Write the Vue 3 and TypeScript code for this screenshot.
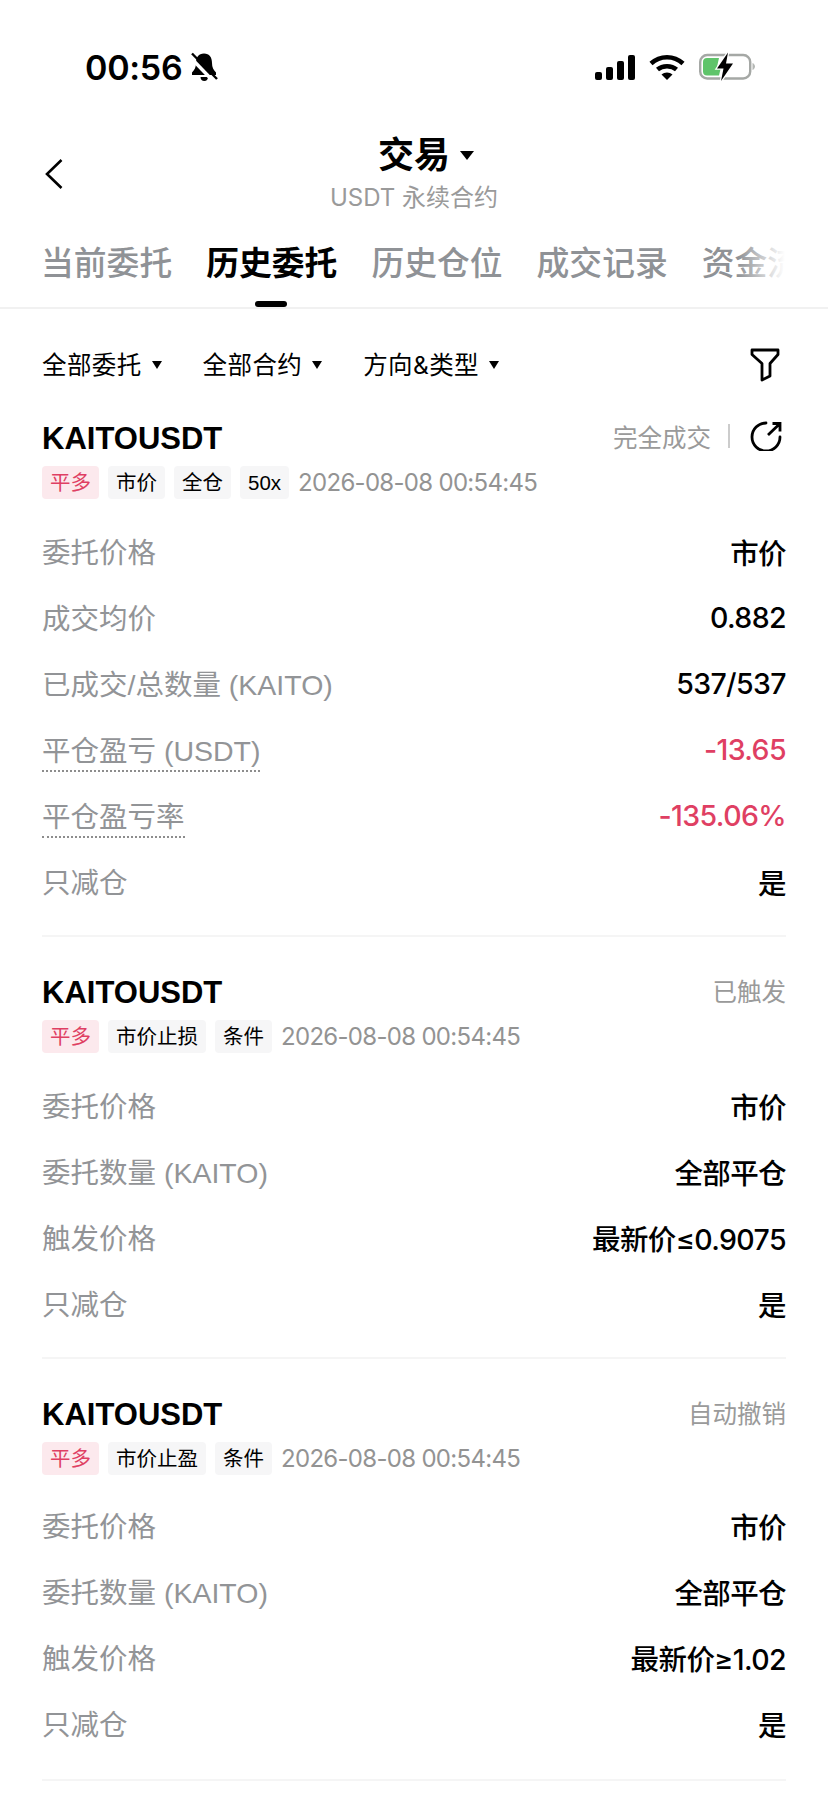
<script setup lang="ts">
interface Tag {
  text: string
  red?: boolean
}

interface Row {
  label: string
  value: string
  red?: boolean
  dotted?: boolean
}

interface Order {
  status: string
  share?: boolean
  tags: Tag[]
  rows: Row[]
}

const tabs = ['当前委托', '历史委托', '历史仓位', '成交记录', '资金流水']
const filters = ['全部委托', '全部合约', '方向&类型']
const time = '2026-08-08 00:54:45'

const orders: Order[] = [
  {
    status: '完全成交',
    share: true,
    tags: [{ text: '平多', red: true }, { text: '市价' }, { text: '全仓' }, { text: '50x' }],
    rows: [
      { label: '委托价格', value: '市价' },
      { label: '成交均价', value: '0.882' },
      { label: '已成交/总数量 (KAITO)', value: '537/537' },
      { label: '平仓盈亏 (USDT)', value: '-13.65', red: true, dotted: true },
      { label: '平仓盈亏率', value: '-135.06%', red: true, dotted: true },
      { label: '只减仓', value: '是' }
    ]
  },
  {
    status: '已触发',
    tags: [{ text: '平多', red: true }, { text: '市价止损' }, { text: '条件' }],
    rows: [
      { label: '委托价格', value: '市价' },
      { label: '委托数量 (KAITO)', value: '全部平仓' },
      { label: '触发价格', value: '最新价≤0.9075' },
      { label: '只减仓', value: '是' }
    ]
  },
  {
    status: '自动撤销',
    tags: [{ text: '平多', red: true }, { text: '市价止盈' }, { text: '条件' }],
    rows: [
      { label: '委托价格', value: '市价' },
      { label: '委托数量 (KAITO)', value: '全部平仓' },
      { label: '触发价格', value: '最新价≥1.02' },
      { label: '只减仓', value: '是' }
    ]
  }
]
</script>

<template>
  <div class="page">
    <div class="status-bar">
      <div class="clock">
        <span>00:56</span>
        <svg class="bell" width="27" height="30" viewBox="0 0 27 30">
          <path d="M13 1.500c-5.500 0-8 4-8 9.500 0 4.500-1.500 7-4 9.500V23h24v-2.500c-2.500-2.500-4-5-4-9.500 0-5.500-2.500-9.500-8-9.500z" fill="#000" />
          <path d="M9.500 25h7.500c0 2.500-1.500 4-3.700 4s-3.800-1.500-3.800-4z" fill="#000" />
          <path d="M-1 5L23 30" stroke="#fff" stroke-width="3.500" />
          <path d="M1 1.500L26 27" stroke="#000" stroke-width="2.400" />
        </svg>
      </div>
      <div class="status-icons">
        <svg width="40" height="25" viewBox="0 0 40 25">
          <rect x="0" y="17" width="7" height="8" rx="2" fill="#000" />
          <rect x="11" y="12" width="7" height="13" rx="2" fill="#000" />
          <rect x="22" y="6" width="7" height="19" rx="2" fill="#000" />
          <rect x="33" y="0" width="7" height="25" rx="2" fill="#000" />
        </svg>
        <svg width="36" height="26" viewBox="0 0 36 26">
          <path d="M2 9.500C11 1 25 1 34 9.500" fill="none" stroke="#000" stroke-width="4.500" />
          <path d="M8.500 15.500C13.500 11 22.500 11 27.500 15.500" fill="none" stroke="#000" stroke-width="4.500" />
          <path d="M12.500 20.500c3-2.800 8-2.800 11 0L18 26z" fill="#000" />
        </svg>
        <svg width="56" height="30" viewBox="0 0 56 30">
          <rect x="1.200" y="3" width="50" height="23.500" rx="7" fill="none" stroke="#a5a8a5" stroke-width="2.400" />
          <path d="M8 6h12l-2 9h4l-2 8.500H8a4 4 0 0 1-4-4V10a4 4 0 0 1 4-4z" fill="#5fc46a" />
          <path d="M53.500 11c1.500.6 2.500 2 2.500 3.500s-1 2.900-2.500 3.500z" fill="#b5b8b5" />
          <path d="M29 0.500L18 16.500h6.500L22 29 34 11.500h-7z" fill="#000" stroke="#fff" stroke-width="2.500" paint-order="stroke" />
        </svg>
      </div>
    </div>

    <div class="nav">
      <svg class="back" width="18" height="30" viewBox="0 0 18 30">
        <path d="M16.500 1L2 15l14.500 14" fill="none" stroke="#000" stroke-width="2.600" />
      </svg>
      <div class="nav-center">
        <div class="nav-title">
          <span class="nav-name">
            交易
            <i class="caret caret-lg"></i>
          </span>
        </div>
        <div class="nav-sub">USDT 永续合约</div>
      </div>
    </div>

    <div class="tabs">
      <div v-for="(tab, i) in tabs" :key="tab" class="tab" :class="{ active: i === 1 }">{{ tab }}</div>
      <div class="tabs-fade"></div>
    </div>

    <div class="filters">
      <div v-for="f in filters" :key="f" class="filter">
        <span>{{ f }}</span>
        <i class="caret"></i>
      </div>
      <svg class="funnel" width="30" height="34" viewBox="0 0 30 34">
        <path d="M2 2h26v4.500L20 15.500V28l-8 4V15.500L2 6.500z" fill="none" stroke="#000" stroke-width="2.800" stroke-linejoin="round" />
      </svg>
    </div>

    <div v-for="(order, n) in orders" :key="n" class="order">
      <div class="order-head">
        <span class="symbol">KAITOUSDT</span>
        <div class="order-status">
          <span>{{ order.status }}</span>
          <template v-if="order.share">
            <i class="status-sep"></i>
            <svg class="share" width="32" height="30" viewBox="0 0 32 30">
              <path d="M16 2A14 14 0 1 0 30 16" fill="none" stroke="#000" stroke-width="2.800" stroke-linecap="round" />
              <path d="M18 14L30 2.500M22.500 2.500h7.500v8" fill="none" stroke="#000" stroke-width="2.800" />
            </svg>
          </template>
        </div>
      </div>
      <div class="tag-row">
        <span v-for="tag in order.tags" :key="tag.text" class="tag" :class="{ 'tag-red': tag.red }">{{ tag.text }}</span>
        <span class="order-time">{{ time }}</span>
      </div>
      <div class="rows">
        <div v-for="row in order.rows" :key="row.label" class="row">
          <span class="label" :class="{ dotted: row.dotted }">{{ row.label }}</span>
          <span class="value" :class="{ red: row.red }">{{ row.value }}</span>
        </div>
      </div>
    </div>
  </div>
</template>

<style scoped>
.page {
  width: 828px;
  height: 1801px;
  overflow: hidden;
  background: #fff;
  color: #000;
  font-family: Inter, "Noto Sans CJK SC", sans-serif;
}

.status-bar {
  height: 134px;
  display: flex;
  align-items: center;
  justify-content: space-between;
  padding: 0 73px 0 85px;
}

.clock {
  display: flex;
  align-items: center;
  gap: 9px;
  font-size: 34px;
  font-weight: 600;
  letter-spacing: -0.3px;
}

.status-icons {
  display: flex;
  align-items: center;
  gap: 14px;
}

.nav {
  height: 80px;
  padding: 0 42px;
  display: grid;
  grid-template-columns: 1fr auto 1fr;
  align-items: center;
}

.back {
  margin-left: 3px;
  margin-top: -1px;
}

.nav-center {
  text-align: center;
}

.nav-title {
  height: 42px;
  font-size: 36px;
  font-weight: 700;
  line-height: 42px;
}

.nav-name {
  position: relative;
  display: inline-block;
}

.nav-sub {
  margin-top: 6px;
  font-size: 24px;
  line-height: 32px;
  color: #9a9a9a;
}

.caret {
  display: inline-block;
  width: 0;
  height: 0;
  border-left: 5px solid transparent;
  border-right: 5px solid transparent;
  border-top: 8px solid #000;
}

.caret-lg {
  position: absolute;
  top: 17px;
  left: calc(100% + 10px);
  border-left-width: 7px;
  border-right-width: 7px;
  border-top-width: 9px;
}

.tabs {
  position: relative;
  height: 95px;
  width: 828px;
  box-sizing: border-box;
  padding: 27px 0 0 41px;
  display: flex;
  gap: 34px;
  overflow: hidden;
  border-bottom: 2px solid #f1f1f1;
}

.tab {
  position: relative;
  flex: none;
  height: 66px;
  font-size: 32.800px;
  line-height: 44px;
  font-weight: 500;
  color: #8f9296;
}

.tab.active {
  color: #000;
  font-weight: 700;
}

.tab.active::after {
  content: "";
  position: absolute;
  left: 49px;
  bottom: 0;
  width: 32px;
  height: 6px;
  border-radius: 3px;
  background: #000;
}

.tabs-fade {
  position: absolute;
  top: 0;
  bottom: 0;
  right: 0;
  width: 90px;
  background: linear-gradient(to right, rgba(255, 255, 255, 0), #fff 52%);
}

.filters {
  height: 108px;
  padding: 0 48px 0 42px;
  display: flex;
  align-items: center;
  gap: 41px;
}

.filter {
  display: flex;
  align-items: center;
  gap: 10px;
  font-size: 24.500px;
  letter-spacing: 0.4px;
}

.filter .caret {
  margin-top: 3px;
}

.funnel {
  margin-left: auto;
  margin-top: 3px;
}

.order {
  margin: 0 42px;
  padding-bottom: 22px;
  border-bottom: 2px solid #f5f5f5;
  margin-bottom: 34px;
}

.order:last-child {
  padding-bottom: 24px;
}

.order:last-child .rows {
  margin-top: 16px;
}

.order-head {
  height: 40px;
  display: flex;
  align-items: center;
  justify-content: space-between;
}

.symbol {
  font-family: "Liberation Sans", sans-serif;
  font-size: 31px;
  font-weight: 700;
  margin-top: 4px;
}

.order-status {
  display: flex;
  align-items: center;
  font-size: 24.500px;
  color: #9a9a9a;
  margin-top: -2px;
}

.status-sep {
  width: 2px;
  height: 24px;
  margin: 0 20px 0 17px;
  background: #ccc;
}

.share {
  margin-right: 4px;
}

.tag-row {
  margin-top: 9px;
  display: flex;
  align-items: center;
  gap: 9px;
}

.tag {
  height: 33px;
  padding: 0 8px;
  border-radius: 4px;
  background: #f6f6f7;
  font-family: "Liberation Sans", "Noto Sans CJK SC", sans-serif;
  font-size: 20.500px;
  line-height: 33px;
}

.tag-red {
  background: #fce9ed;
  color: #df3f63;
}

.order-time {
  font-size: 24px;
  letter-spacing: -0.7px;
  color: #939393;
}

.rows {
  margin-top: 18px;
}

.row {
  height: 66px;
  display: flex;
  align-items: center;
  justify-content: space-between;
}

.label {
  font-family: "Liberation Sans", "Noto Sans CJK SC", sans-serif;
  font-size: 28.500px;
  color: #929497;
}

.label.dotted {
  border-bottom: 2px dotted #8d8d8d;
  padding-bottom: 1px;
  margin-top: 3px;
}

.value {
  font-size: 28.500px;
  font-weight: 500;
  letter-spacing: -0.6px;
  margin-top: 3px;
}

.value.red {
  color: #df3f63;
}
</style>
